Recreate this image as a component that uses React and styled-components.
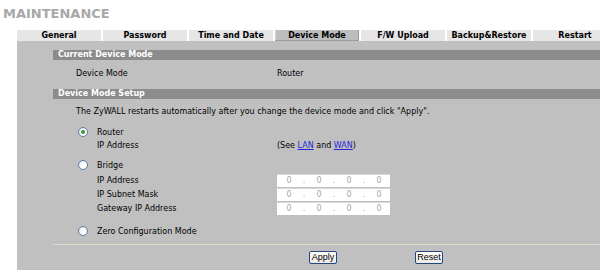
import styled, { createGlobalStyle } from "styled-components";

const GlobalStyle = createGlobalStyle`
	body {
		margin: 0;
		overflow: hidden;
		background: #ffffff;
		font-family: "DejaVu Sans", Verdana, sans-serif;
		font-size: 8px;
		color: #000000;
	}
`;

const Page = styled.div`
	width: 600px;
	height: 270px;
	overflow: hidden;
`;

const Title = styled.div`
	height: 30px;
	line-height: 27px;
	padding-left: 3px;
	font-size: 13px;
	font-weight: 700;
	color: #a8a8a8;
`;

const TabBar = styled.div`
	display: flex;
	gap: 2px;
	margin-left: 17px;
	width: 583px;
	height: 11px;
	overflow: hidden;
`;

const Tab = styled.div`
	flex: 0 0 84px;
	height: 11px;
	line-height: 11px;
	text-align: center;
	font-weight: 700;
	white-space: nowrap;
	background: ${(p) => (p.$active ? "#bdbdbd" : "#e6e6e6")};
	box-shadow: ${(p) =>
		p.$active ? "inset -1px -1px 0 #9c9c9c, inset 1px 0 0 #d0d0d0" : "none"};
`;

const Panel = styled.div`
	margin-left: 17px;
	width: 583px;
	height: 229px;
	padding-top: 9px;
	box-sizing: border-box;
	background: #c0c0c0;
`;

const SectionHeader = styled.div`
	margin-left: 36px;
	margin-top: ${(p) => p.$top || 0}px;
	height: 10px;
	line-height: 10px;
	padding-left: 5px;
	background: #8c8c8c;
	color: #ffffff;
	font-weight: 700;
`;

const InfoRow = styled.div`
	display: flex;
	align-items: center;
	height: 26px;
	padding-left: 59px;
`;

const Label = styled.div`
	flex: 0 0 ${(p) => p.$width || 201}px;
	white-space: nowrap;
`;

const Note = styled.div`
	height: 26px;
	line-height: 26px;
	padding-left: 59px;
	white-space: nowrap;
`;

const RadioRow = styled.div`
	display: flex;
	align-items: center;
	height: 14px;
	padding-left: 61px;
	margin-top: ${(p) => p.$top || 0}px;
`;

const Radio = styled.span`
	position: relative;
	flex: 0 0 10px;
	width: 10px;
	height: 10px;
	margin-right: 9px;
	box-sizing: border-box;
	border: 1px solid #5f7fa5;
	border-radius: 50%;
	background: radial-gradient(circle at 60% 60%, #ffffff 30%, #d6dbe2 100%);

	&::after {
		content: "";
		display: ${(p) => (p.$checked ? "block" : "none")};
		position: absolute;
		left: 2px;
		top: 2px;
		width: 4px;
		height: 4px;
		border-radius: 50%;
		background: #2f9c36;
	}
`;

const SubRow = styled.div`
	display: flex;
	align-items: center;
	height: ${(p) => p.$height || 14}px;
	padding-left: 80px;
	margin-top: ${(p) => p.$top || 0}px;
`;

const Link = styled.a`
	color: #2525d9;
	text-decoration: underline;
`;

const IpBox = styled.div`
	display: flex;
	align-items: center;
	width: 113px;
	height: 13px;
	padding-left: 7px;
	box-sizing: border-box;
	background: #ffffff;
	border-top: 1px solid #d8d8d8;
	color: #a8a8a8;
`;

const Octet = styled.span`
	flex: 0 0 10px;
	text-align: center;
`;

const Dot = styled.span`
	flex: 0 0 20px;
	text-align: center;
`;

const Separator = styled.div`
	margin: 6px 0 0 36px;
	border-top: 1px solid #dcd7c9;
`;

const ButtonRow = styled.div`
	display: flex;
	gap: 78px;
	margin-top: 6px;
	padding-left: 292px;
`;

const Button = styled.button`
	width: 28px;
	height: 13px;
	padding: 0;
	border: 1px solid #23467e;
	border-radius: 2px;
	background: linear-gradient(#ffffff, #ecebe6);
	font-family: "Liberation Sans", Arial, sans-serif;
	font-size: 9px;
	line-height: 11px;
	color: #000000;
`;

const tabs = [
	"General",
	"Password",
	"Time and Date",
	"Device Mode",
	"F/W Upload",
	"Backup&Restore",
	"Restart",
];

const IpField = () => (
	<IpBox>
		<Octet>0</Octet>
		<Dot>.</Dot>
		<Octet>0</Octet>
		<Dot>.</Dot>
		<Octet>0</Octet>
		<Dot>.</Dot>
		<Octet>0</Octet>
	</IpBox>
);

export default function App() {
	return (
		<Page>
			<GlobalStyle />
			<Title>MAINTENANCE</Title>
			<TabBar>
				{tabs.map((t) => (
					<Tab key={t} $active={t === "Device Mode"}>
						{t}
					</Tab>
				))}
			</TabBar>
			<Panel>
				<SectionHeader>Current Device Mode</SectionHeader>
				<InfoRow>
					<Label>Device Mode</Label>
					<div>Router</div>
				</InfoRow>
				<SectionHeader $top={3}>Device Mode Setup</SectionHeader>
				<Note>
					The ZyWALL restarts automatically after you change the device mode
					and click "Apply".
				</Note>

				<RadioRow>
					<Radio $checked />
					<span>Router</span>
				</RadioRow>
				<SubRow $height={13}>
					<Label $width={180}>IP Address</Label>
					<div>
						(See <Link href="#">LAN</Link> and <Link href="#">WAN</Link>)
					</div>
				</SubRow>

				<RadioRow $top={6}>
					<Radio />
					<span>Bridge</span>
				</RadioRow>
				<SubRow $top={1}>
					<Label $width={180}>IP Address</Label>
					<IpField />
				</SubRow>
				<SubRow>
					<Label $width={180}>IP Subnet Mask</Label>
					<IpField />
				</SubRow>
				<SubRow>
					<Label $width={180}>Gateway IP Address</Label>
					<IpField />
				</SubRow>

				<RadioRow $top={9}>
					<Radio />
					<span>Zero Configuration Mode</span>
				</RadioRow>

				<Separator />
				<ButtonRow>
					<Button>Apply</Button>
					<Button>Reset</Button>
				</ButtonRow>
			</Panel>
		</Page>
	);
}
